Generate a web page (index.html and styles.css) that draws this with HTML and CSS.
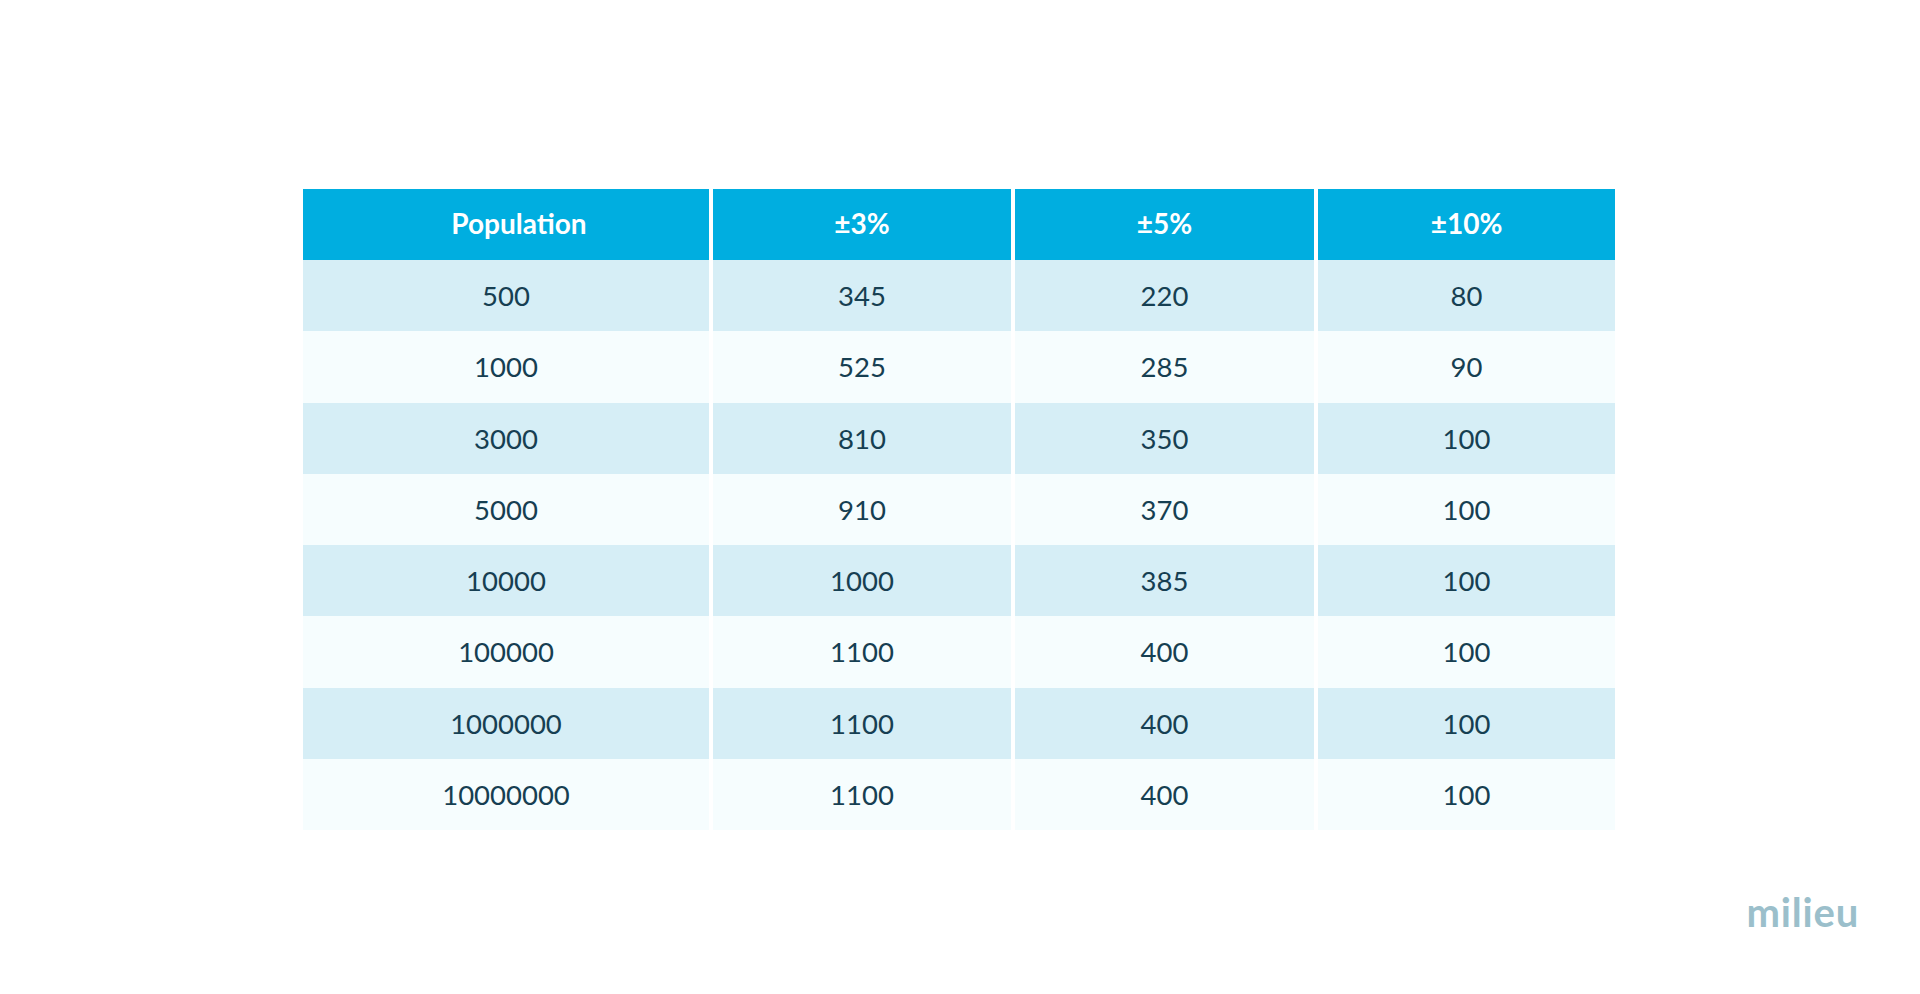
FILE: index.html
```html
<!DOCTYPE html>
<html>
<head>
<meta charset="utf-8">
<link rel="stylesheet" href="styles.css">
</head>
<body>
<main class="page">
  <table class="sample-table">
    <colgroup>
      <col class="c1"><col class="c2"><col class="c3"><col class="c4">
    </colgroup>
    <thead>
      <tr><th class="pop">Population</th><th>±3%</th><th>±5%</th><th>±10%</th></tr>
    </thead>
    <tbody>
      <tr class="dark"><td>500</td><td>345</td><td>220</td><td>80</td></tr>
      <tr class="light"><td>1000</td><td>525</td><td>285</td><td>90</td></tr>
      <tr class="dark"><td>3000</td><td>810</td><td>350</td><td>100</td></tr>
      <tr class="light"><td>5000</td><td>910</td><td>370</td><td>100</td></tr>
      <tr class="dark"><td>10000</td><td>1000</td><td>385</td><td>100</td></tr>
      <tr class="light"><td>100000</td><td>1100</td><td>400</td><td>100</td></tr>
      <tr class="dark"><td>1000000</td><td>1100</td><td>400</td><td>100</td></tr>
      <tr class="light"><td>10000000</td><td>1100</td><td>400</td><td>100</td></tr>
    </tbody>
  </table>
  <footer class="brand-row">
    <span class="brand">milieu</span>
  </footer>
</main>
</body>
</html>
```
FILE: styles.css
```css
html, body {
  margin: 0;
  padding: 0;
  background: #ffffff;
}
body {
  font-family: Lato, "Open Sans", sans-serif;
  width: 1920px;
  height: 994px;
  overflow: hidden;
}
.page {
  display: flex;
  flex-direction: column;
  padding-top: 189px;
  padding-left: 299px;
}
.sample-table {
  border-collapse: separate;
  border-spacing: 4px 0;
  table-layout: fixed;
  width: 1320px;
}
.c1 { width: 406px; }
.c2 { width: 298px; }
.c3 { width: 299px; }
.c4 { width: 297px; }
.sample-table th,
.sample-table td {
  padding: 0;
  text-align: center;
  vertical-align: middle;
  box-sizing: border-box;
}
.sample-table th {
  height: 71px;
  background: #00aee0;
  color: #ffffff;
  font-weight: 700;
  font-size: 28px;
  padding-bottom: 3px;
}
.sample-table th.pop {
  padding-left: 26px;
}
.sample-table td {
  height: 71.25px;
  color: #163f52;
  font-size: 27.5px;
  font-weight: 400;
}
.dark td { background: #d6eef6; }
.light td { background: #f6fdfe; }
.brand-row {
  display: flex;
  justify-content: flex-end;
  padding-right: 61px;
  margin-top: 62px;
}
.brand {
  font-family: Lato, sans-serif;
  font-weight: 700;
  font-size: 40px;
  letter-spacing: 0.8px;
  color: #9bbfcb;
  line-height: 1;
}
```
